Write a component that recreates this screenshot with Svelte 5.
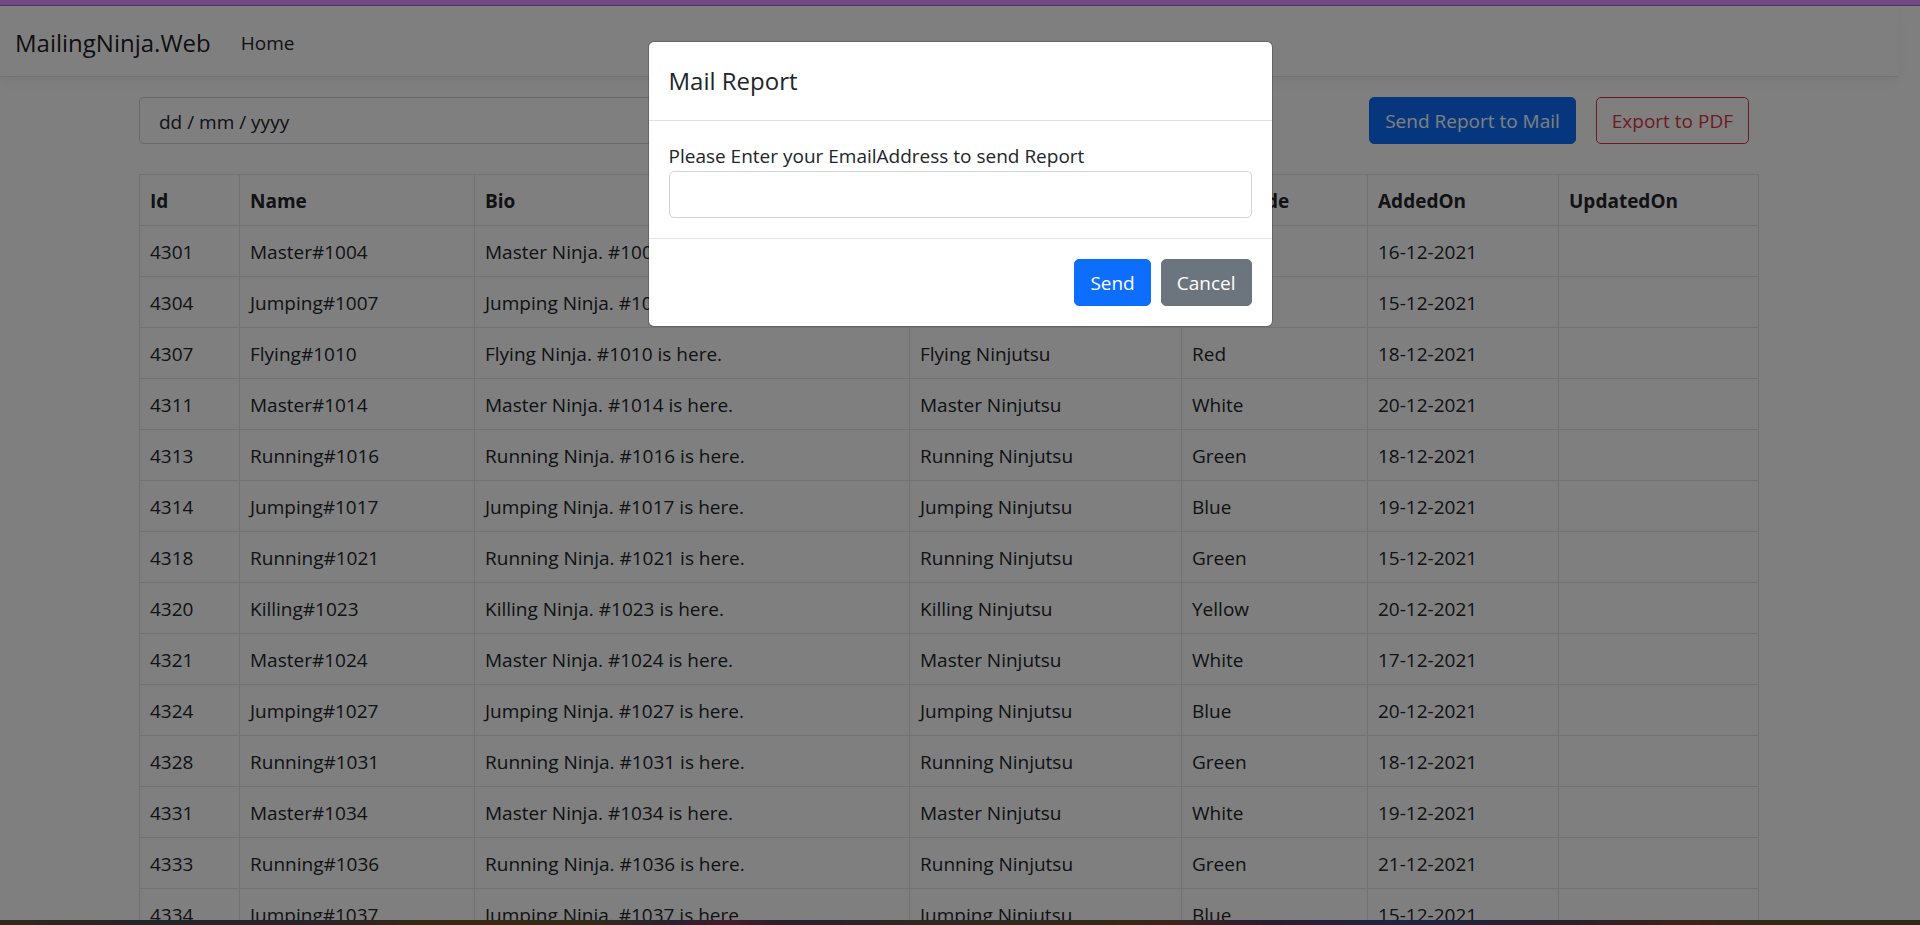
<script>
  const ninjas = [
    [4301, 'Master', 1004, 'White', '16-12-2021'],
    [4304, 'Jumping', 1007, 'Blue', '15-12-2021'],
    [4307, 'Flying', 1010, 'Red', '18-12-2021'],
    [4311, 'Master', 1014, 'White', '20-12-2021'],
    [4313, 'Running', 1016, 'Green', '18-12-2021'],
    [4314, 'Jumping', 1017, 'Blue', '19-12-2021'],
    [4318, 'Running', 1021, 'Green', '15-12-2021'],
    [4320, 'Killing', 1023, 'Yellow', '20-12-2021'],
    [4321, 'Master', 1024, 'White', '17-12-2021'],
    [4324, 'Jumping', 1027, 'Blue', '20-12-2021'],
    [4328, 'Running', 1031, 'Green', '18-12-2021'],
    [4331, 'Master', 1034, 'White', '19-12-2021'],
    [4333, 'Running', 1036, 'Green', '21-12-2021'],
    [4334, 'Jumping', 1037, 'Blue', '15-12-2021']
  ];
</script>

<div class="screen">
  <div class="top-strip"></div>
  <div class="viewport">
    <div class="page">
      <header>
        <a class="brand" href="#home">MailingNinja.Web</a>
        <nav><a href="#home">Home</a></nav>
      </header>
      <main>
        <div class="toolbar">
          <input class="control" type="text" placeholder="dd / mm / yyyy" aria-label="Report date" />
          <div class="actions">
            <button class="btn primary" type="button">Send Report to Mail</button>
            <button class="btn outline" type="button">Export to PDF</button>
          </div>
        </div>
        <table>
          <colgroup>
            <col class="c-id" /><col class="c-name" /><col class="c-bio" /><col class="c-skill" />
            <col class="c-color" /><col class="c-added" /><col class="c-updated" />
          </colgroup>
          <thead>
            <tr><th>Id</th><th>Name</th><th>Bio</th><th>Skill</th><th>ColorCode</th><th>AddedOn</th><th>UpdatedOn</th></tr>
          </thead>
          <tbody>
            {#each ninjas as [id, kind, number, color, added]}
              <tr>
                <td>{id}</td>
                <td>{kind}#{number}</td>
                <td>{kind} Ninja. #{number} is here.</td>
                <td>{kind} Ninjutsu</td>
                <td>{color}</td>
                <td>{added}</td>
                <td></td>
              </tr>
            {/each}
          </tbody>
        </table>
      </main>
    </div>
    <div class="backdrop">
      <div class="modal" role="dialog" aria-modal="true" aria-labelledby="modal-title">
        <div class="modal-header"><h5 id="modal-title">Mail Report</h5></div>
        <div class="modal-body">
          <label for="email">Please Enter your EmailAddress to send Report</label>
          <input class="control" id="email" type="email" />
        </div>
        <div class="modal-footer">
          <button class="btn primary" type="button">Send</button>
          <button class="btn secondary" type="button">Cancel</button>
        </div>
      </div>
    </div>
  </div>
  <div class="bottom-strip"></div>
</div>

<style>
  :global(body) {
    margin: 0;
    overflow: hidden;
  }
  .screen {
    display: grid;
    grid-template-rows: 6px minmax(0, 1fr) 5px;
    height: 100vh;
    color: #212529;
    font: 19px/30px "Open Sans", "Noto Sans", sans-serif;
  }
  .screen * {
    box-sizing: border-box;
  }
  .top-strip {
    background: #704882;
    border-bottom: 1px solid #50305f;
  }
  .bottom-strip {
    background: linear-gradient(90deg, #33271a, #22252a 8%, #2a2329 16%, #38280f 24%, #33281a 31%, #2a2030 35%, #421c28 38%, #28202c 41%, #2b2822 47%, #352718 58%, #3a241a 61%, #2a1c30 66%, #1f2443 73%, #27202e 80%, #3b2319 88%, #2e2a18 94%, #2f2719);
  }
  .viewport {
    position: relative;
    overflow: hidden;
    background: #fff;
  }
  .page {
    margin-right: 22px;
  }
  header {
    display: flex;
    align-items: center;
    gap: 30px;
    height: 71px;
    padding: 4px 15px 0;
    border-bottom: 1px solid #dee2e6;
    box-shadow: 0 5px 15px rgba(0, 0, 0, 0.05);
  }
  header a {
    color: #212529;
    text-decoration: none;
  }
  header .brand {
    color: rgba(0, 0, 0, 0.9);
    font-size: 24px;
  }
  main {
    max-width: 1620px;
    margin: 0 auto;
    padding-top: 20px;
  }
  .toolbar {
    display: flex;
    justify-content: space-between;
    margin-bottom: 30px;
    padding-right: 10px;
  }
  .toolbar .control {
    width: 48%;
  }
  .actions {
    display: flex;
    gap: 20px;
  }
  .control {
    display: block;
    width: 100%;
    height: 47px;
    padding: 2px 19px 0;
    border: 1px solid #ced4da;
    border-radius: 5px;
    background: #fff;
    color: #212529;
    font: inherit;
  }
  .control::placeholder {
    color: #212529;
    opacity: 1;
  }
  .btn {
    height: 47px;
    padding: 1px 15px 0;
    border: 1px solid transparent;
    border-radius: 5px;
    color: #fff;
    font: inherit;
    white-space: nowrap;
  }
  .primary {
    border-color: #0d6efd;
    background: #0d6efd;
  }
  .secondary {
    border-color: #6c757d;
    background: #6c757d;
  }
  .outline {
    border-color: #dc3545;
    background: transparent;
    color: #dc3545;
  }
  table {
    width: 100%;
    table-layout: fixed;
    border-collapse: collapse;
  }
  th,
  td {
    height: 51px;
    padding: 2px 10px 0;
    border: 1px solid #dee2e6;
    text-align: left;
    white-space: nowrap;
  }
  .c-id { width: 100px; }
  .c-name { width: 235px; }
  .c-bio { width: 435px; }
  .c-skill { width: 272px; }
  .c-color { width: 186px; }
  .c-added { width: 191px; }
  .c-updated { width: 200px; }
  .backdrop {
    position: absolute;
    inset: 0;
    padding-top: 35px;
    background: rgba(0, 0, 0, 0.5);
  }
  .modal {
    width: 625px;
    max-width: 100%;
    margin: 0 auto;
    border: 1px solid rgba(0, 0, 0, 0.2);
    border-radius: 6px;
    background: #fff;
    background-clip: padding-box;
  }
  .modal-header {
    padding: 20px;
    border-bottom: 1px solid #dee2e6;
  }
  h5 {
    margin: 0;
    font-size: 24px;
    font-weight: 400;
    line-height: 38px;
  }
  .modal-body {
    padding: 20px;
  }
  .modal-body label {
    display: block;
  }
  .modal-footer {
    display: flex;
    justify-content: flex-end;
    gap: 10px;
    padding: 20px;
    border-top: 1px solid #dee2e6;
  }
</style>
